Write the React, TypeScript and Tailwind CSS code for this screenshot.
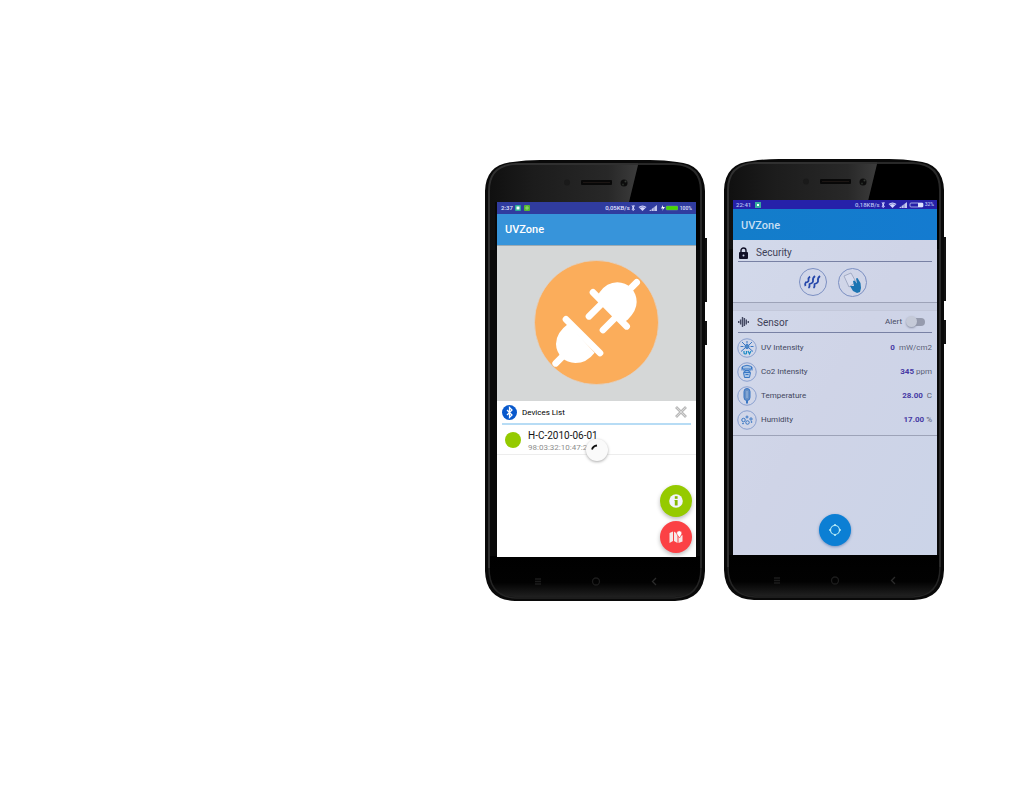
import React from "react";

function PhoneShell({ id, children, padding }: { id: string; children: React.ReactNode; padding: string }) {
  return (
    <div className={`relative flex w-[220px] shrink-0 flex-col ${padding}`}>
      <svg className="absolute top-0 left-0 overflow-visible" width="223" height="441" viewBox="0 0 223 441" aria-hidden="true">
        <defs>
          <linearGradient id={`${id}-gloss`} x1="0" y1="0" x2="1" y2="0">
            <stop offset="0" stopColor="#101010" />
            <stop offset="0.3" stopColor="#1c1c1c" />
            <stop offset="0.8" stopColor="#282828" />
            <stop offset="1" stopColor="#3c3c3c" />
          </linearGradient>
          <linearGradient id={`${id}-foot`} x1="0" y1="0" x2="0" y2="1">
            <stop offset="0" stopColor="#000" />
            <stop offset="0.65" stopColor="#020202" />
            <stop offset="1" stopColor="#202020" />
          </linearGradient>
        </defs>
        <path d="M219 78h3v64h-3zM219 161h3v24h-3z" fill="#111" />
        <path d="M0 31Q1 4 28 2Q40 0 55 0H165Q180 0 192 2Q219 4 220 31V411Q219 440 190 441H30Q1 440 0 411Z" fill="#090909" />
        <path d="M5 396H215V410Q215 437 189 437H31Q5 437 5 410Z" fill={`url(#${id}-foot)`} />
        <path d="M153 5H189Q215 5 215 31V90H144V42Z" fill="#000" />
        <path d="M5 90V31Q5 6 31 5H153L144 42H10V90Z" fill={`url(#${id}-gloss)`} />
        <path d="M4 408V31Q4 5 31 4H153" fill="none" stroke="#303030" strokeWidth="2" />
        <path d="M153 4H189Q216 5 216 31V408" fill="none" stroke="#282828" strokeWidth="2" />
        <path d="M4 408Q4 437 31 438H189Q216 437 216 408" fill="none" stroke="#242424" strokeWidth="1.500" />
        <rect x="96" y="20" width="31" height="5" rx="1" fill="#080808" />
        <path d="M98 22.500h27" stroke="#1c1614" strokeWidth="1" />
        <circle cx="82" cy="22.500" r="3" fill="#1a1a1a" />
        <circle cx="139" cy="23" r="3.500" fill="#0c0c0c" />
        <circle cx="140.500" cy="21.500" r="1" fill="#343a34" />
        <circle cx="138" cy="24.500" r="1" fill="#262b26" />
        <g fill="none" stroke="#1c1c1c" strokeWidth="1.300">
          <path d="M50 419h6M50 421.500h6M50 424h6" />
          <circle cx="111" cy="421.500" r="3.500" />
          <path d="M171 418l-3.500 3.500L171 425" stroke="#2b2b2b" />
        </g>
      </svg>
      {children}
    </div>
  );
}

function Signals() {
  return (
    <svg className="h-2 w-7" viewBox="0 0 28 8" aria-hidden="true">
      <path d="M2 1.500l2.500 4.500M4.500 1.500L2 6M3.200 1v6" stroke="#d5d7ff" strokeWidth=".9" />
      <path d="M8.500 3Q12.500 0 16.500 3L12.500 7Z" fill="#d5d7ff" />
      <path d="M9.500 3.800Q12.500 1.800 15.500 3.800" fill="none" stroke="#3940a5" strokeWidth=".5" />
      <path d="M19 7h8V1Z" fill="#c3c7ee" />
      <path d="M21.500 7V4M24 7V3" stroke="#3940a5" strokeWidth=".5" />
    </svg>
  );
}

function Plugs() {
  return (
    <svg className="size-[125px]" viewBox="132 44 375 375" role="img" aria-label="Connect">
      <circle cx="319.500" cy="231.500" r="186" fill="#fbad5b" stroke="#dcd5d0" strokeWidth="2" />
      <g stroke="#fff" strokeWidth="20" strokeLinecap="round">
        <path d="M309 141L410 243M297 213L345 165M339 254L387 206M440 111L410 141M228 222L330 323M197 354L227 324" />
      </g>
      <path d="M322 152L329 141Q350 111 382 111A58 58 0 0 1 440 170Q440 197 413 223L400 232Z" fill="#fff" />
      <path d="M234 236Q198 262 198 296A58 58 0 0 0 256 353Q290 353 314 322Z" fill="#fff" />
    </svg>
  );
}

function DevicePhone() {
  return (
    <PhoneShell id="device" padding="mt-px pt-[42px] pr-[9px] pb-11 pl-3">
      <section className="relative flex min-h-[355px] flex-col bg-white">
        <div className="flex h-3 items-center bg-[#303c9f] px-1 text-[6px] leading-3 font-medium text-[#e3e5ff]">
          <span>2:37</span>
          <svg className="ml-0.5 h-1.5 w-4" viewBox="0 0 16 6" aria-hidden="true">
            <rect width="6" height="6" rx="1" fill="#27ad96" /><rect x="1.500" y="1.500" width="3" height="3" fill="#fff" />
            <rect x="9" width="6" height="6" rx="1" fill="#56b831" /><path d="M11 2h2v2h-2z" fill="none" stroke="#b8e79c" strokeWidth=".6" />
          </svg>
          <span className="ml-auto text-[6px]">0,05KB/s</span>
          <Signals />
          <svg className="mx-0.5 h-2 w-[18px]" viewBox="0 0 18 8" aria-hidden="true">
            <path d="M3 1L1 4.500h2L2 7l3-4H3Z" fill="#fff" />
            <rect x="6" y="2" width="12" height="4" rx="1" fill="#47d800" stroke="#6c9a91" strokeWidth=".5" />
          </svg>
          <span className="text-[5px]">100%</span>
        </div>
        <header className="flex h-[31px] items-center bg-[#3794da] px-2">
          <h1 className="text-[11px] leading-4 font-medium text-white">UVZone</h1>
        </header>
        <div className="flex h-[156px] items-center justify-center border-t border-[#9eabb3] bg-[#d5d7d7] pb-0.5"><Plugs /></div>
        <div className="mx-[5px] flex h-6 items-center border-b-2 border-[#b7dcf5]">
          <svg className="size-[15px]" viewBox="0 0 30 30" aria-hidden="true">
            <circle cx="15" cy="15" r="15" fill="#0959cc" />
            <path d="M10 10L20 20L15 25V5L20 10L10 20" fill="none" stroke="#fff" strokeWidth="2.500" />
          </svg>
          <h2 className="ml-[5px] pt-px text-[8px] leading-3 text-black">Devices List</h2>
          <button className="ml-auto p-1" aria-label="Close">
            <svg className="size-3" viewBox="0 0 12 12"><path d="M1 1l10 10M11 1L1 11" stroke="#b9b9b9" strokeWidth="2.800" /><path d="M1.500 1.500l9 9M10.500 1.500l-9 9" stroke="#d8d8d8" /></svg>
          </button>
        </div>
        <div className="relative flex h-[30px] items-center border-b border-[#ededed] px-2">
          <span className="size-4 rounded-full bg-[#94ca00]" />
          <div className="ml-[7px] pt-1">
            <p className="text-[10px] leading-[13px] text-[#141414]">H-C-2010-06-01</p>
            <p className="text-[8px] leading-3 text-[#8d8d8d]">98:03:32:10:47:2</p>
          </div>
          <div className="absolute top-[14px] left-[89px] flex size-[22px] items-center justify-center rounded-full bg-[#fafafa] shadow-[0_1px_3px_#aaa]" role="status" aria-label="Loading">
            <svg className="size-[15px]" viewBox="0 0 15 15"><path d="M2 6.500Q3 3 7 2.500" fill="none" stroke="#111" strokeWidth="1.800" /></svg>
          </div>
        </div>
        <div className="mt-auto flex flex-col items-end gap-1 pr-1 pb-1">
          <button aria-label="Information" className="flex size-8 items-center justify-center rounded-full bg-[#95ca00] shadow-[0_2px_4px_#bbb]">
            <svg className="size-4" viewBox="0 0 16 16"><circle cx="8" cy="8" r="6.800" fill="#f3f4fc" /><rect x="6.800" y="3.200" width="2.800" height="2.600" fill="#86b900" /><path d="M6.500 7h3.100v5.500H6.800V8h-.3Z" fill="#86b900" /></svg>
          </button>
          <button aria-label="Map" className="flex size-8 items-center justify-center rounded-full bg-[#fb4145] shadow-[0_2px_4px_#bbb]">
            <svg className="size-4" viewBox="0 0 16 16"><path d="M1.500 4l3.500-1.500V12L1.500 14ZM6 2.500L9.500 5v9L6 12ZM10.500 8l4-2v6.500l-4 1.500Z" fill="#f5e9e8" /><path d="M11.500 9Q8.500 5 8.500 4A2.800 2.800 0 0 1 14 4Q14 5 11.500 9" fill="#fff" stroke="#fb4145" strokeWidth=".7" /></svg>
          </button>
        </div>
      </section>
    </PhoneShell>
  );
}

type Kind = "uv" | "co2" | "temperature" | "humidity";

function SensorIcon({ kind }: { kind: Kind }) {
  return (
    <svg className="size-5 shrink-0" viewBox="0 0 40 40" fill="none" stroke="#3977c4" strokeWidth="2" aria-hidden="true">
      <circle cx="20" cy="20" r="18.500" stroke="#718dc7" strokeWidth="1.500" />
      {kind === "uv" && <><circle cx="20" cy="17" r="4" fill="#4f88c4" /><path d="M20 6v5M7 17h6M27 17h6M10 8l6 6M30 8l-6 6M16 20l-8 7M24 20l8 7" /><path d="M14 26v4q0 2 2.500 2t2.500-2v-4M22 26l3 6 3-6" stroke="#188ac5" strokeWidth="2.400" /></>}
      {kind === "co2" && <><path d="M11 9q9-5 18 0v5H11ZM14 14v5q6 4 12 0v-5M13 21l2 10h10l2-10Z" fill="#a8c4e6" /><path d="M10 10v7M30 10v7M16 17h8M17 25h6" /></>}
      {kind === "temperature" && <><rect x="14" y="5" width="12" height="24" rx="6" fill="#6790c5" /><path d="M20 29v6" strokeWidth="4" /><path d="M20 10v14" stroke="#b0c9ea" strokeWidth="1.500" /></>}
      {kind === "humidity" && <><circle cx="13" cy="20" r="3.500" /><circle cx="21" cy="25" r="3.500" /><circle cx="28" cy="18" r="2.300" /><circle cx="20" cy="14" r="2" /><circle cx="29" cy="24" r="1" /><circle cx="12" cy="27" r="1" /></>}
    </svg>
  );
}

const readings: { kind: Kind; label: string; value: string; unit: string }[] = [
  { kind: "uv", label: "UV Intensity", value: "0", unit: " mW/cm2" },
  { kind: "co2", label: "Co2 Intensity", value: "345", unit: "ppm" },
  { kind: "temperature", label: "Temperature", value: "28.00", unit: " C" },
  { kind: "humidity", label: "Humidity", value: "17.00", unit: "%" },
];

function SensorPhone() {
  return (
    <PhoneShell id="sensor" padding="pt-[41px] pr-[7px] pb-[45px] pl-[9px]">
      <section className="relative flex min-h-[355px] flex-col bg-linear-to-br from-[#d3daeb] via-[#cfd4e7] to-[#cbd4e8]">
        <div className="flex h-[9px] items-center bg-[#2621a9] px-[3px] text-[5px] leading-[9px] font-medium text-[#b9c2ef]">
          <span className="text-[6px]">22:41</span>
          <span className="ml-1 flex size-1.5 items-center justify-center bg-[#36ad9d]"><span className="size-0.5 bg-white" /></span>
          <span className="ml-auto text-[6px]">0,18KB/s</span>
          <Signals />
          <svg className="mx-px h-1.5 w-[15px]" viewBox="0 0 15 6" aria-hidden="true"><rect x="1" y="1" width="13" height="4" rx="1" fill="none" stroke="#bdc5ef" strokeWidth=".8" /><path d="M9 1h5v4H9z" fill="#dce1ff" /></svg>
          <span>32%</span>
        </div>
        <header className="flex h-[31px] items-center bg-linear-to-r from-[#137dca] to-[#147bd0] px-2">
          <h1 className="pt-0.5 text-[11px] leading-4 font-medium text-[#c7dff3]">UVZone</h1>
        </header>
        <div className="mx-[5px] flex h-[22px] items-center border-b border-[#7881a4] pt-1">
          <svg className="h-3 w-[11px]" viewBox="0 0 11 12" aria-hidden="true"><path d="M3 5V3.500a2.500 2.500 0 0 1 5 0V5" fill="none" stroke="#111128" strokeWidth="1.400" /><rect x="1" y="5" width="9" height="7" rx="1" fill="#111128" /><circle cx="5.500" cy="8.500" r="1" fill="#c9d1e8" /></svg>
          <h2 className="ml-[7px] text-[10px] leading-4 text-[#3d4057]">Security</h2>
        </div>
        <div className="flex h-[41px] items-center justify-center gap-[11px] border-b border-[#9da3b8] pr-1">
          <button aria-label="Heat security">
            <svg className="size-7" viewBox="0 0 28 28" fill="none"><circle cx="14" cy="14" r="13.500" stroke="#7b8fc2" /><path d="M11 8.500Q9 10 9.500 12T6.500 14.500M16 8Q13.500 10 14 12.500T10.500 16Q11 19 9.500 20M21 8Q18.500 10 19 12.500T15.500 16Q16 19 14.500 20M7 14Q5.500 16 6.500 18" stroke="#2547aa" strokeWidth="1.800" strokeLinejoin="round" /></svg>
          </button>
          <button aria-label="Card security">
            <svg className="size-[29px]" viewBox="0 0 29 29"><circle cx="14.500" cy="14.500" r="14" fill="none" stroke="#7b8fc2" /><path d="M6 8l7-3 5 9-7 5Z" fill="#d7dcee" stroke="#a3acc5" /><path d="M12 18l4 0-1-5 1.500-.5 2.500 3-1-5 1.500-.5 3 5 .5 5-1 4-3 1-4-2Z" fill="#1b74b2" /></svg>
          </button>
        </div>
        <div className="h-2 border-b border-[#c3c8da] bg-[#c8cee1]" />
        <div className="mx-[5px] flex h-[22px] items-center border-b border-[#7881a4]">
          <svg className="h-3 w-[11px]" viewBox="0 0 11 12" fill="none" aria-hidden="true"><path d="M.7 5v2M2.600 3.500v5M4.500 1v10M6.400 2v8M8.300 3.500v5M10.300 5v2" stroke="#454a63" strokeWidth="1.400" /></svg>
          <h2 className="ml-2 pt-0.5 text-[10px] leading-4 text-[#3d4057]">Sensor</h2>
          <label className="ml-auto flex items-center gap-1 pr-1.5 text-[8px] leading-3 text-[#454a63]">
            Alert
            <span className="relative flex h-3 w-5 items-center">
              <input type="checkbox" role="switch" className="peer absolute inset-0 opacity-0" />
              <span className="ml-1 h-2 w-[15px] rounded-full bg-[#969bad]" />
              <span className="absolute left-0 size-[11px] rounded-full bg-[#c5cad8] shadow-[0_1px_2px_#8c92a7] peer-checked:left-2" />
            </span>
          </label>
        </div>
        <dl className="border-b border-[#9da3b8] pt-[3px] pr-[5px] pb-[3px] pl-1">
          {readings.map((r) => (
            <div key={r.kind} className="flex h-6 items-center">
              <SensorIcon kind={r.kind} />
              <dt className="ml-1 text-[8px] leading-3 text-[#42465d]">{r.label}</dt>
              <dd className="ml-auto text-[8px] leading-3 whitespace-pre text-[#5b5f77]"><strong className="font-bold text-[#4639a4]">{r.value}</strong> {r.unit}</dd>
            </div>
          ))}
        </dl>
        <div className="mt-auto flex justify-center pb-[9px]">
          <button aria-label="Locate" className="flex size-8 items-center justify-center rounded-full bg-[#0b7fd4] shadow-[0_1px_3px_#7792bf]">
            <svg className="size-[14px]" viewBox="0 0 14 14"><circle cx="7" cy="7" r="4.500" fill="none" stroke="#b7ecf5" strokeWidth="1.200" /><path d="M7 1v2M7 11v2M1 7h2M11 7h2" stroke="#b7ecf5" strokeWidth="1.600" /></svg>
          </button>
        </div>
      </section>
    </PhoneShell>
  );
}

export default function App() {
  return (
    <main className="flex min-h-screen items-start justify-end gap-[19px] bg-white pt-[159px] pr-20 font-['Roboto',sans-serif]">
      <DevicePhone />
      <SensorPhone />
    </main>
  );
}
